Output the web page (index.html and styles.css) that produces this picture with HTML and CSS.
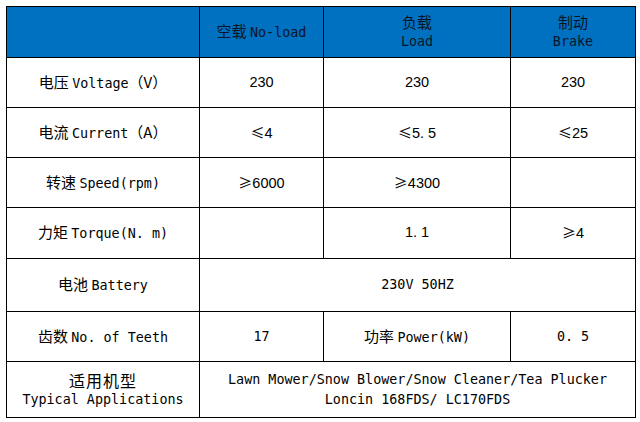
FILE: index.html
```html
<!DOCTYPE html>
<html lang="zh">
<head>
<meta charset="utf-8">
<title>Spec table</title>
<link rel="stylesheet" href="styles.css">
</head>
<body>
<div class="spec">
  <div class="cell head"></div>
  <div class="cell head"><span class="line"><span class="zh">空载 </span>No-load</span></div>
  <div class="cell head"><span class="line zh">负载</span><span class="line">Load</span></div>
  <div class="cell head"><span class="line zh">制动</span><span class="line">Brake</span></div>

  <div class="cell"><span class="line"><span class="zh">电压 </span>Voltage<span class="zh">（V）</span></span></div>
  <div class="cell num">230</div>
  <div class="cell num">230</div>
  <div class="cell num">230</div>

  <div class="cell"><span class="line"><span class="zh">电流 </span>Current<span class="zh">（A）</span></span></div>
  <div class="cell num"><span class="sym">≤</span>4</div>
  <div class="cell num"><span class="sym">≤</span>5. 5</div>
  <div class="cell num"><span class="sym">≤</span>25</div>

  <div class="cell"><span class="line"><span class="zh">转速 </span>Speed(rpm)</span></div>
  <div class="cell num"><span class="sym">≥</span>6000</div>
  <div class="cell num"><span class="sym">≥</span>4300</div>
  <div class="cell"></div>

  <div class="cell"><span class="line"><span class="zh">力矩 </span>Torque(N. m)</span></div>
  <div class="cell"></div>
  <div class="cell num">1. 1</div>
  <div class="cell num"><span class="sym">≥</span>4</div>

  <div class="cell"><span class="line"><span class="zh">电池 </span>Battery</span></div>
  <div class="cell wide">230V 50HZ</div>

  <div class="cell"><span class="line"><span class="zh">齿数 </span>No. of Teeth</span></div>
  <div class="cell">17</div>
  <div class="cell"><span class="line"><span class="zh">功率 </span>Power(kW)</span></div>
  <div class="cell">0. 5</div>

  <div class="cell"><span class="line zh big">适用机型</span><span class="line">Typical Applications</span></div>
  <div class="cell wide"><span class="line">Lawn Mower/Snow Blower/Snow Cleaner/Tea Plucker</span><span class="line">Loncin 168FDS/ LC170FDS</span></div>
</div>
</body>
</html>
```

FILE: styles.css
```css
html, body {
  margin: 0;
  padding: 0;
  background: #fff;
}

body {
  font-family: "DejaVu Sans Mono", "Noto Sans CJK SC", monospace;
  font-size: 13.4px;
  color: #000;
}

.spec {
  position: relative;
  display: grid;
  grid-template-columns: 192px 123px 186px 124px;
  grid-template-rows: 50px 49px 49px 49px 50px 52px 49px 55px;
  gap: 1px;
  width: max-content;
  margin: 6px 0 0 6px;
  background: #000;
  border: 1px solid #000;
}

.spec::before {
  content: "";
  position: absolute;
  top: -2px;
  left: 0;
  width: 632px;
  height: 52px;
  background: #0070c0;
  z-index: -1;
}

.cell {
  background: #fff;
  display: flex;
  flex-direction: column;
  align-items: center;
  justify-content: center;
  text-align: center;
  line-height: 20px;
  white-space: pre;
}

.head {
  background: #0070c0;
  color: #0a1628;
}

.line {
  display: block;
}

.zh {
  font-family: "Noto Sans CJK SC", sans-serif;
  font-size: 15px;
}

.zh.big {
  font-size: 16px;
  letter-spacing: 1px;
}

.num {
  display: block;
  font-family: "Liberation Sans", "Noto Sans CJK SC", sans-serif;
  font-size: 14.5px;
  line-height: 49px;
}

.sym {
  font-family: "Noto Sans CJK SC", sans-serif;
  font-size: 14px;
}

.wide {
  grid-column: 2 / 5;
}
```
